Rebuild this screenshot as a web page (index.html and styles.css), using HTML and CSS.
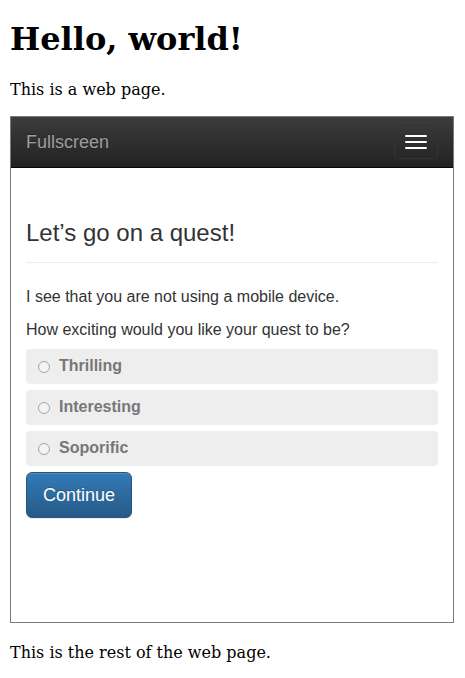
FILE: index.html
```html
<!DOCTYPE html>
<html>
<head>
<meta charset="utf-8">
<title>Hello, world!</title>
<link rel="stylesheet" href="styles.css">
</head>
<body>
<h1 class="title">Hello, world!</h1>
<p class="text">This is a web page.</p>
<div class="frame">
  <nav class="navbar">
    <span class="brand">Fullscreen</span>
    <button class="toggle" type="button" aria-label="Menu">
      <span class="bar"></span>
      <span class="bar"></span>
      <span class="bar"></span>
    </button>
  </nav>
  <div class="content">
    <div class="page-header">
      <h1 class="quest-title">Let’s go on a quest!</h1>
    </div>
    <p class="lead-text">I see that you are not using a mobile device.</p>
    <p class="lead-text question">How exciting would you like your quest to be?</p>
    <div class="options">
      <label class="option"><span class="radio"></span><span class="option-label">Thrilling</span></label>
      <label class="option"><span class="radio"></span><span class="option-label">Interesting</span></label>
      <label class="option"><span class="radio"></span><span class="option-label">Soporific</span></label>
    </div>
    <button class="btn-continue" type="button">Continue</button>
  </div>
</div>
<p class="text">This is the rest of the web page.</p>
</body>
</html>
```

FILE: styles.css
```css
html, body {
  background: #fff;
}
body {
  margin: 0 10px;
  padding: 0;
  font-family: "DejaVu Serif", serif;
  font-size: 16px;
  color: #000;
}
.title {
  font-size: 32px;
  font-weight: bold;
  line-height: 37px;
  margin: 21.44px 0;
}
.text {
  margin: 16px 0;
  line-height: 19px;
}
.frame {
  box-sizing: border-box;
  width: 444px;
  height: 507px;
  margin: 17px 0 20px;
  border: 1px solid #7a7a7a;
  font-family: "Liberation Sans", Arial, sans-serif;
  color: #333;
  overflow: hidden;
}
.navbar {
  height: 50px;
  border-bottom: 1px solid #080808;
  background: linear-gradient(to bottom, #3c3c3c 0%, #222 100%);
  display: flex;
  align-items: flex-start;
  justify-content: space-between;
}
.brand {
  font-size: 18px;
  line-height: 20px;
  padding: 15px;
  color: #9d9d9d;
  text-shadow: 0 -1px 0 rgba(0,0,0,.25);
}
.toggle {
  box-sizing: border-box;
  margin: 8px 15px 0 0;
  width: 44px;
  height: 34px;
  padding: 9px 10px;
  background: transparent;
  border: 1px solid #333;
  border-radius: 4px;
  display: flex;
  flex-direction: column;
  gap: 4px;
}
.bar {
  display: block;
  width: 22px;
  height: 2px;
  background: #fff;
  border-radius: 1px;
}
.content {
  padding: 0 15px;
}
.page-header {
  margin: 52px 0 22px;
  padding-bottom: 16px;
  border-bottom: 1px solid #eee;
}
.quest-title {
  margin: 0;
  font-size: 24px;
  font-weight: normal;
  line-height: 26px;
  color: #333;
}
.lead-text {
  margin: 0 0 10px;
  font-size: 16px;
  line-height: 23px;
}
.question {
  margin-bottom: 8px;
}
.options {
  display: flex;
  flex-direction: column;
  gap: 6px;
}
.option {
  height: 35px;
  background: #eee;
  border-radius: 4px;
  display: flex;
  align-items: center;
  padding-left: 12px;
}
.radio {
  box-sizing: border-box;
  width: 12px;
  height: 12px;
  border: 1px solid #a5a5a5;
  border-radius: 50%;
  background: #f4f4f4;
  margin-right: 9px;
  margin-top: 1px;
}
.option-label {
  font-size: 16px;
  font-weight: bold;
  color: #777;
}
.btn-continue {
  margin-top: 6px;
  box-sizing: border-box;
  height: 46px;
  padding: 10px 16px;
  font-family: "Liberation Sans", Arial, sans-serif;
  font-size: 18px;
  line-height: 24px;
  color: #fff;
  text-shadow: 0 -1px 0 rgba(0,0,0,.2);
  background: linear-gradient(to bottom, #337ab7 0%, #265a88 100%);
  border: 1px solid #245580;
  border-radius: 6px;
  box-shadow: inset 0 1px 0 rgba(255,255,255,.15), 0 1px 1px rgba(0,0,0,.075);
}
```
